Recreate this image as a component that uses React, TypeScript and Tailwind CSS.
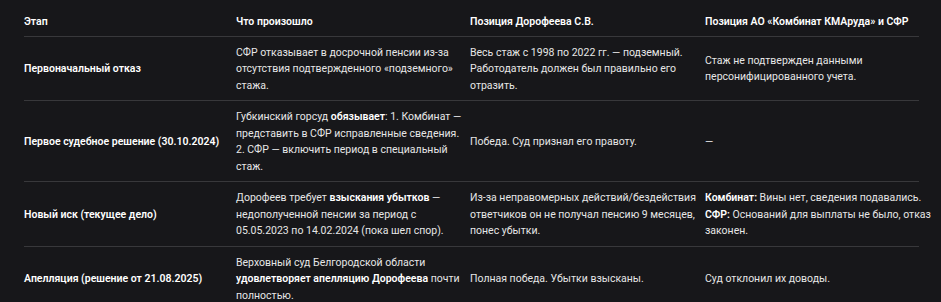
import React from 'react';

type Cell = React.ReactNode[];

type Row = {
  stage: string;
  what: Cell;
  his: Cell;
  theirs: Cell;
};

const B = ({ children }: { children: React.ReactNode }) => (
  <b className="font-semibold text-white">{children}</b>
);

const rows: Row[] = [
  {
    stage: 'Первоначальный отказ',
    what: ['СФР отказывает в досрочной пенсии из-за', 'отсутствия подтвержденного «подземного»', 'стажа.'],
    his: ['Весь стаж с 1998 по 2022 гг. — подземный.', 'Работодатель должен был правильно его', 'отразить.'],
    theirs: ['Стаж не подтвержден данными', 'персонифицированного учета.'],
  },
  {
    stage: 'Первое судебное решение (30.10.2024)',
    what: [
      <>
        Губкинский горсуд <B>обязывает</B>: 1. Комбинат —
      </>,
      'представить в СФР исправленные сведения.',
      '2. СФР — включить период в специальный',
      'стаж.',
    ],
    his: ['Победа. Суд признал его правоту.'],
    theirs: ['—'],
  },
  {
    stage: 'Новый иск (текущее дело)',
    what: [
      <>
        Дорофеев требует <B>взыскания убытков</B> —
      </>,
      'недополученной пенсии за период с',
      '05.05.2023 по 14.02.2024 (пока шел спор).',
    ],
    his: ['Из-за неправомерных действий/бездействия', 'ответчиков он не получал пенсию 9 месяцев,', 'понес убытки.'],
    theirs: [
      <>
        <B>Комбинат:</B> Вины нет, сведения подавались.
      </>,
      <>
        <B>СФР:</B> Оснований для выплаты не было, отказ
      </>,
      'законен.',
    ],
  },
  {
    stage: 'Апелляция (решение от 21.08.2025)',
    what: [
      'Верховный суд Белгородской области',
      <>
        <B>удовлетворяет апелляцию Дорофеева</B> почти
      </>,
      'полностью.',
    ],
    his: ['Полная победа. Убытки взысканы.'],
    theirs: ['Суд отклонил их доводы.'],
  },
];

const headers = ['Этап', 'Что произошло', 'Позиция Дорофеева С.В.', 'Позиция АО «Комбинат КМАруда» и СФР'];

const Lines = ({ lines }: { lines: Cell }) => (
  <>
    {lines.map((l, i) => (
      <React.Fragment key={i}>
        {i > 0 && <br />}
        {l}
      </React.Fragment>
    ))}
  </>
);

export default function App() {
  return (
    <div className="min-h-screen w-full bg-[#17171a] pl-6 pt-[7px] font-['Roboto',sans-serif] text-[10.5px] leading-[16.5px] text-[#e6e6e6]">
      <table className="w-[895px] table-fixed border-collapse">
        <colgroup>
          <col className="w-[212px]" />
          <col className="w-[234px]" />
          <col className="w-[235px]" />
          <col className="w-[214px]" />
        </colgroup>
        <thead>
          <tr className="border-b border-[#38383b]">
            {headers.map((h) => (
              <th key={h} className="whitespace-nowrap pt-[7px] pb-[5px] pr-2 text-left align-middle font-semibold text-white">
                {h}
              </th>
            ))}
          </tr>
        </thead>
        <tbody>
          {rows.map((r, i) => (
            <tr key={r.stage} className={i < rows.length - 1 ? 'border-b border-[#38383b]' : ''}>
              <td className="whitespace-nowrap pt-2 pb-[6px] pr-2 align-middle font-semibold text-white">{r.stage}</td>
              <td className="whitespace-nowrap pt-2 pb-[6px] pr-2 align-middle">
                <Lines lines={r.what} />
              </td>
              <td className="whitespace-nowrap pt-2 pb-[6px] pr-2 align-middle">
                <Lines lines={r.his} />
              </td>
              <td className="whitespace-nowrap pt-2 pb-[6px] pr-2 align-middle">
                <Lines lines={r.theirs} />
              </td>
            </tr>
          ))}
        </tbody>
      </table>
    </div>
  );
}
